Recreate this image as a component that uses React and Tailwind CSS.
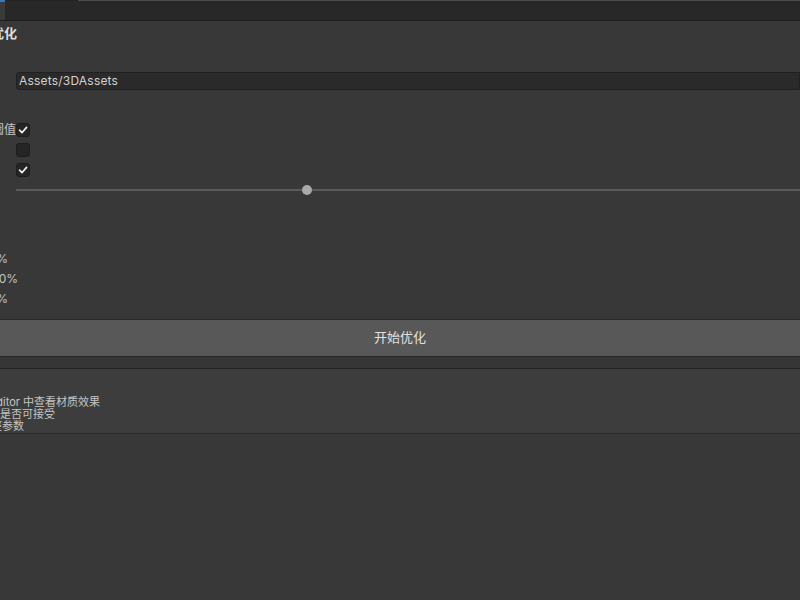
import React from 'react';

const font = { fontFamily: 'Inter, "Noto Sans CJK SC", sans-serif' };

// label clipped on the left, right edge at a fixed x
const Clip = ({ w, children, className = '' }) => (
  <div className={`shrink-0 overflow-hidden flex justify-end whitespace-nowrap ${w} ${className}`}>
    <span className="shrink-0">{children}</span>
  </div>
);

const Check = ({ on }) => (
  <div className="w-[14px] h-[14px] rounded-[3px] bg-[#252525] border border-[#1d1d1d] flex items-center justify-center">
    {on && (
      <svg width="10" height="10" viewBox="0 0 10 10">
        <path d="M1.5 5.2 L4 7.6 L8.6 2.4" fill="none" stroke="#f0f0f0" strokeWidth="1.6" strokeLinecap="round" strokeLinejoin="round" />
      </svg>
    )}
  </div>
);

export default function App() {
  return (
    <div className="w-[800px] h-[600px] overflow-hidden bg-[#383838] text-[#c4c4c4] flex flex-col" style={font}>
      {/* tab strip */}
      <div className="h-[21px] flex bg-[#282828] border-b border-[#1f1f1f]">
        <div className="w-[5px] bg-[#3a3a3a] border-t-2 border-[#3a79bb]" />
        <div className="w-[73px] border-t border-[#232323]" />
        <div className="flex-1 border-t border-[#4c4c4c]" />
      </div>

      {/* title */}
      <div className="mt-[4px] h-[18px] flex items-center">
        <Clip w="w-[17px]" className="text-[13px] font-bold text-[#dcdcdc]">材质优化</Clip>
      </div>

      {/* folder field */}
      <div className="mt-[29px] flex pl-[16px]">
        <div className="flex-1 h-[18px] bg-[#2a2a2a] border border-[#202020] rounded-l-[3px] flex items-center pl-[2px] text-[12px] tracking-[0.2px] text-[#d2d2d2]">
          Assets/3DAssets
        </div>
      </div>

      {/* toggles */}
      <div className="mt-[30px] flex flex-col">
        <div className="h-[20px] flex items-center">
          <Clip w="w-[16px]" className="text-[12px]">透明阈值</Clip>
          <Check on />
        </div>
        <div className="h-[20px] flex items-center pl-[16px]">
          <Check />
        </div>
        <div className="h-[20px] flex items-center pl-[16px]">
          <Check on />
        </div>
        <div className="h-[20px] flex items-center pl-[16px]">
          <div className="relative flex-1 h-[2px] bg-[#5b5b5b]">
            <div className="absolute left-[286px] top-[-4px] w-[10px] h-[10px] rounded-full bg-[#a9a9a9]" />
          </div>
        </div>
      </div>

      {/* stats */}
      <div className="mt-[49px] flex flex-col text-[12px]">
        <div className="h-[20px] flex items-center">
          <Clip w="w-[8px]">预计节省: 45%</Clip>
        </div>
        <div className="h-[20px] flex items-center">
          <Clip w="w-[18px]">压缩质量: 100%</Clip>
        </div>
        <div className="h-[20px] flex items-center">
          <Clip w="w-[8px]">纹理尺寸: 50%</Clip>
        </div>
      </div>

      {/* action */}
      <div className="mt-[10px] h-[38px] bg-[#585858] border-t border-[#2c2c2c] border-b border-b-[#262626] flex items-center justify-center text-[13px] text-[#e2e2e2]">
        开始优化
      </div>

      <div className="h-[11px] bg-[#363636]" />

      {/* help box */}
      <div className="h-[66px] bg-[#3d3d3d] border-t border-[#242424] border-b border-b-[#2a2a2a] pt-[27px] flex flex-col text-[11px] leading-[12px]">
        <Clip w="w-[100px]">1. 在 Editor 中查看材质效果</Clip>
        <Clip w="w-[55px]">2. 检查外观是否可接受</Clip>
        <Clip w="w-[24px]">3. 必要时调整参数</Clip>
      </div>
    </div>
  );
}
